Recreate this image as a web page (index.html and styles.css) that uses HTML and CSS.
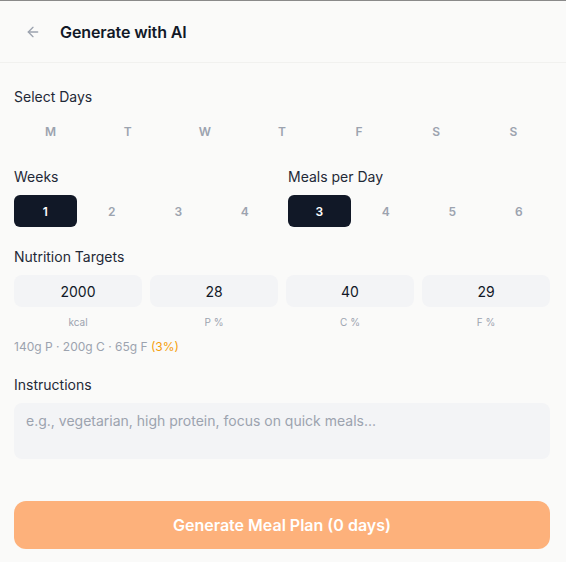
FILE: index.html
```
<!DOCTYPE html>
<html>
<head>
<meta charset="utf-8">
<link rel="stylesheet" href="styles.css">
</head>
<body>
<div class="app">
  <header class="header">
    <button class="back" aria-label="Back">
      <svg width="16" height="16" viewBox="0 0 24 24" fill="none" stroke="currentColor" stroke-width="2" stroke-linecap="round" stroke-linejoin="round"><path d="M19 12H5"/><path d="M12 19l-7-7 7-7"/></svg>
    </button>
    <h1 class="title">Generate with AI</h1>
  </header>
  <main class="content">
    <section class="section">
      <div class="label">Select Days</div>
      <div class="days">
        <button class="day">M</button>
        <button class="day">T</button>
        <button class="day">W</button>
        <button class="day">T</button>
        <button class="day">F</button>
        <button class="day">S</button>
        <button class="day">S</button>
      </div>
    </section>
    <section class="two-col">
      <div class="col">
        <div class="label">Weeks</div>
        <div class="options">
          <button class="opt active">1</button>
          <button class="opt">2</button>
          <button class="opt">3</button>
          <button class="opt">4</button>
        </div>
      </div>
      <div class="col">
        <div class="label">Meals per Day</div>
        <div class="options">
          <button class="opt active">3</button>
          <button class="opt">4</button>
          <button class="opt">5</button>
          <button class="opt">6</button>
        </div>
      </div>
    </section>
    <section class="section">
      <div class="label">Nutrition Targets</div>
      <div class="targets">
        <div class="target"><div class="field">2000</div><div class="unit">kcal</div></div>
        <div class="target"><div class="field">28</div><div class="unit">P %</div></div>
        <div class="target"><div class="field">40</div><div class="unit">C %</div></div>
        <div class="target"><div class="field">29</div><div class="unit">F %</div></div>
      </div>
      <div class="macros">140g P · 200g C · 65g F <span class="warn">(3%)</span></div>
    </section>
    <section class="section">
      <div class="label">Instructions</div>
      <textarea class="textarea" placeholder="e.g., vegetarian, high protein, focus on quick meals..."></textarea>
    </section>
    <button class="generate">Generate Meal Plan (0 days)</button>
  </main>
</div>
</body>
</html>
```
FILE: styles.css
```
* { box-sizing: border-box; }
html, body { margin: 0; padding: 0; }
body {
  background: #fafaf9;
  font-family: Inter, "Noto Sans", sans-serif;
  color: #1f2937;
  width: 566px;
  height: 562px;
  overflow: hidden;
}
button { font-family: inherit; border: none; background: none; padding: 0; cursor: pointer; }
.app { border-top: 1px solid #8a8a8a; }
.header {
  height: 62px;
  display: flex;
  align-items: center;
  padding: 0 0 0 25px;
  gap: 19px;
  border-bottom: 1px solid #f1f1ef;
}
.back { color: #9ca3af; display: flex; align-items: center; width: 16px; height: 16px; }
.title { margin: 0; font-size: 16px; font-weight: 600; color: #111827; letter-spacing: -0.1px; }
.content {
  padding: 24px 16px 0 14px;
  display: flex;
  flex-direction: column;
  gap: 20px;
}
.label { font-size: 14px; line-height: 20px; color: #1f2937; margin-bottom: 8px; }
.days { display: grid; grid-template-columns: repeat(7, 1fr); gap: 4px; }
.day {
  height: 32px;
  font-size: 12px;
  font-weight: 600;
  color: #9ca3af;
  border-radius: 8px;
}
.two-col { display: grid; grid-template-columns: 1fr 1fr; gap: 12px; }
.options { display: grid; grid-template-columns: repeat(4, 1fr); gap: 4px; }
.opt {
  height: 32px;
  font-size: 12px;
  font-weight: 600;
  color: #9ca3af;
  border-radius: 6px;
}
.opt.active { background: #111827; color: #ffffff; }
.targets { display: grid; grid-template-columns: repeat(4, 1fr); gap: 8px; }
.target { display: flex; flex-direction: column; align-items: center; }
.field {
  width: 100%;
  height: 32px;
  background: #f3f4f6;
  border-radius: 8px;
  display: flex;
  align-items: center;
  justify-content: center;
  font-size: 14px;
  color: #111827;
}
.unit { font-size: 10px; line-height: 14px; color: #9ca3af; margin-top: 8px; }
.macros { font-size: 12px; line-height: 17px; color: #9ca3af; margin-top: 9px; }
.warn { color: #f59e0b; }
.textarea {
  display: block;
  width: 100%;
  height: 56px;
  background: #f3f4f6;
  border: none;
  border-radius: 8px;
  padding: 9px 12px;
  font-family: inherit;
  font-size: 14px;
  color: #111827;
  resize: none;
  outline: none;
}
.textarea::placeholder { color: #9ca3af; }
.generate {
  margin-top: 22px;
  height: 48px;
  width: 100%;
  border-radius: 12px;
  background: #fdb17b;
  color: #ffffff;
  font-size: 16px;
  font-weight: 600;
}
```
